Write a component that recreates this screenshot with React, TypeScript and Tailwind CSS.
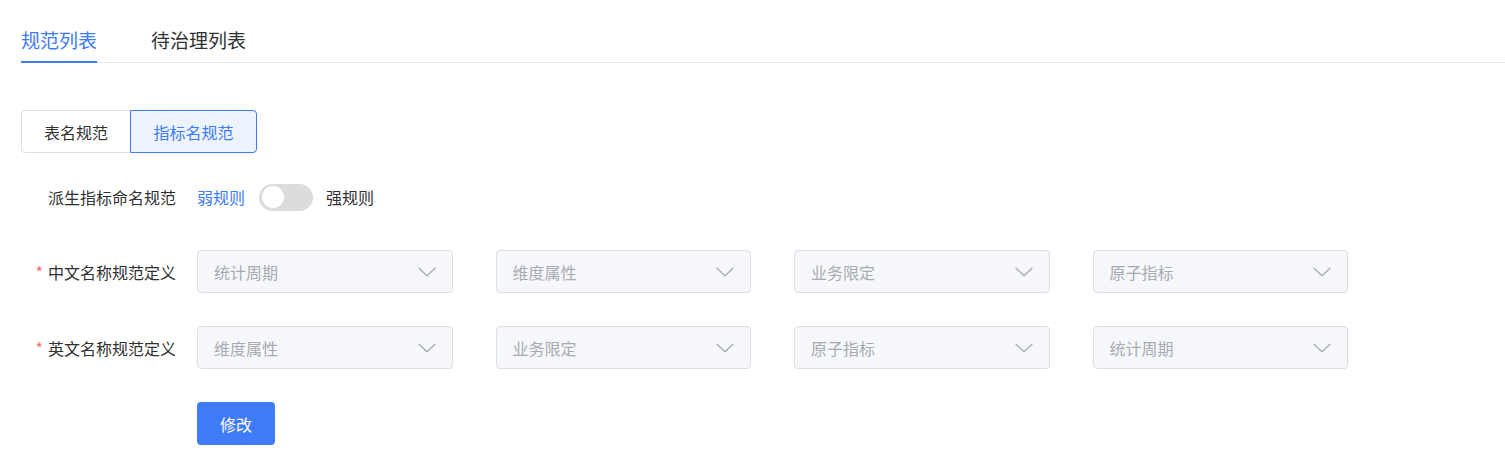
import React from "react";

const FONT = { fontFamily: '"Noto Sans CJK SC", "Noto Sans", sans-serif' };

function Chevron() {
  return (
    <svg width="18" height="10" viewBox="0 0 18 10" fill="none" className="shrink-0">
      <path d="M1 1.2 L9 8.8 L17 1.2" stroke="#a8abb2" strokeWidth="1.3" strokeLinecap="round" strokeLinejoin="round" />
    </svg>
  );
}

function Select({ placeholder }: { placeholder: string }) {
  return (
    <div className="w-[255.5px] h-[43px] flex items-center justify-between pl-[16px] pr-[16px] bg-[#f5f7fa] border border-[#dcdfe6] rounded-[4px]">
      <span className="text-[16px] leading-[20px] text-[#a8abb2]">{placeholder}</span>
      <Chevron />
    </div>
  );
}

function FormRow({ label, items }: { label: string; items: string[] }) {
  return (
    <div className="flex items-center">
      <div className="w-[155px] flex justify-end items-center text-[16px] text-[#303133] leading-[20px]">
        <span className="text-[#f56c6c] mr-[5px] text-[16px]">*</span>
        <span>{label}</span>
      </div>
      <div className="ml-[21px] flex gap-[43px]">
        {items.map((t, i) => (
          <Select key={i} placeholder={t} />
        ))}
      </div>
    </div>
  );
}

export default function App() {
  return (
    <div className="w-[1505px] h-[475px] bg-white pl-[21px]" style={FONT}>
      {/* tabs */}
      <div className="flex gap-[54px] border-b border-[#e4e7ed]">
        <div className="flex flex-col pt-[28px] -mb-px">
          <span className="text-[19px] leading-[24px] text-[#3d7bf7]">规范列表</span>
          <div className="mt-[9px] h-[2px] bg-[#3d7bf7]" />
        </div>
        <div className="flex flex-col pt-[28px] -mb-px">
          <span className="text-[19px] leading-[24px] text-[#303133]">待治理列表</span>
          <div className="mt-[9px] h-[2px] bg-transparent" />
        </div>
      </div>

      {/* segmented */}
      <div className="mt-[47px] flex">
        <div className="w-[109px] h-[43px] flex items-center justify-center border border-[#dcdfe6] border-r-0 rounded-l-[4px] text-[16px] text-[#303133]">
          表名规范
        </div>
        <div className="w-[127px] h-[43px] flex items-center justify-center border border-[#3d7bf7] rounded-r-[4px] bg-[#edf4ff] text-[16px] text-[#3d7bf7]">
          指标名规范
        </div>
      </div>

      {/* switch row */}
      <div className="mt-[24px] h-[40px] flex items-center">
        <div className="w-[155px] text-right text-[16px] text-[#303133]">派生指标命名规范</div>
        <div className="ml-[21px] flex items-center">
          <span className="text-[16px] text-[#3d7bf7]">弱规则</span>
          <div className="ml-[14px] w-[54px] h-[27px] rounded-full bg-[#dcdcdc] flex items-center pl-[3px]">
            <div className="w-[22px] h-[22px] rounded-full bg-white" />
          </div>
          <span className="ml-[13px] text-[16px] text-[#303133]">强规则</span>
        </div>
      </div>

      <div className="mt-[33px] flex flex-col gap-[33px]">
        <FormRow label="中文名称规范定义" items={["统计周期", "维度属性", "业务限定", "原子指标"]} />
        <FormRow label="英文名称规范定义" items={["维度属性", "业务限定", "原子指标", "统计周期"]} />
        <div className="flex">
          <div className="w-[155px]" />
          <button className="ml-[21px] w-[78px] h-[43px] rounded-[4px] bg-[#3f7bf6] text-white text-[16px]">修改</button>
        </div>
      </div>
    </div>
  );
}
